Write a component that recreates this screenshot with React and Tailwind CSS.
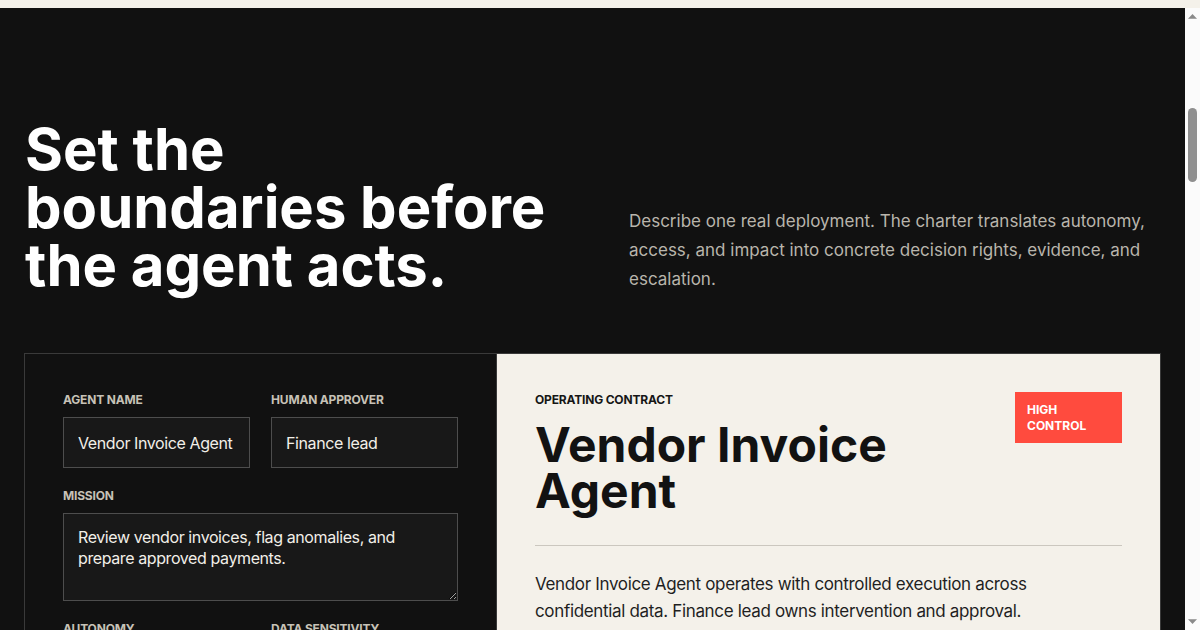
import React from "react";

const font = { fontFamily: "Inter, 'Noto Sans', sans-serif" };

function Label({ children, dark }) {
  return (
    <div
      className={`text-[12px] leading-[16px] font-bold uppercase tracking-[-0.015em] ${
        dark ? "text-[#161616]" : "text-[#c7c2b7]"
      }`}
    >
      {children}
    </div>
  );
}

function Field({ label, children }) {
  return (
    <div className="flex flex-col gap-[9px] min-w-0">
      <Label>{label}</Label>
      {children}
    </div>
  );
}

function TextInput({ value }) {
  return (
    <input
      readOnly
      value={value}
      className="w-full h-[51px] px-[14px] bg-[#181818] border border-[#4d4d4d] text-[16px] tracking-[-0.025em] text-[#f2efe8] outline-none"
      style={font}
    />
  );
}

function Select({ value }) {
  return (
    <div className="w-full h-[51px] px-[14px] bg-[#181818] border border-[#4d4d4d] text-[16px] tracking-[-0.025em] text-[#f2efe8] flex items-center justify-between">
      <span>{value}</span>
      <svg width="12" height="8" viewBox="0 0 12 8" fill="none">
        <path d="M1 1l5 5 5-5" stroke="#c7c2b7" strokeWidth="1.6" />
      </svg>
    </div>
  );
}

function Scrollbar() {
  return (
    <div className="w-[15px] shrink-0 bg-[#fbfbfb] flex flex-col items-center">
      <svg width="15" height="15" viewBox="0 0 15 15" className="shrink-0">
        <path d="M3 10.7h9L7.5 6z" fill="#8a8a8a" />
      </svg>
      <div className="h-[85px] shrink-0" />
      <div className="w-[9px] h-[74px] rounded-full bg-[#8f8f8f] shrink-0" />
      <div className="flex-1" />
      <svg width="15" height="15" viewBox="0 0 15 15" className="shrink-0">
        <path d="M3 4.3h9L7.5 9z" fill="#8a8a8a" />
      </svg>
    </div>
  );
}

export default function App() {
  return (
    <div className="h-screen flex flex-col overflow-hidden bg-[#111111]" style={font}>
      <div className="h-[8px] shrink-0 bg-[#f4f1ea]" />
      <div className="flex-1 min-h-0 flex">
        <main className="flex-1 min-w-0 overflow-hidden">
          <section className="px-6 pt-[112px] pb-24">
            <div className="flex items-end justify-between">
              <h1 className="text-white font-bold text-[58px] leading-[58px] tracking-normal pl-[1px]">
                Set the
                <br />
                boundaries before
                <br />
                the agent acts.
              </h1>
              <p className="w-[532px] text-[17px] leading-[29px] text-[#b9b5ac]">
                Describe one real deployment. The charter translates autonomy, access, and impact
                into concrete decision rights, evidence, and escalation.
              </p>
            </div>

            <div className="mt-[59px] flex border border-[#3a3a3a]">
              {/* form */}
              <div className="w-[472px] shrink-0 border-r border-[#3a3a3a] p-[38px] flex flex-col gap-[20px]">
                <div className="grid grid-cols-2 gap-[21px]">
                  <Field label="Agent name">
                    <TextInput value="Vendor Invoice Agent" />
                  </Field>
                  <Field label="Human approver">
                    <TextInput value="Finance lead" />
                  </Field>
                </div>
                <Field label="Mission">
                  <textarea
                    readOnly
                    value="Review vendor invoices, flag anomalies, and prepare approved payments."
                    className="w-full h-[88px] px-[14px] py-[13px] bg-[#181818] border border-[#4d4d4d] text-[16px] leading-[21px] tracking-[-0.025em] text-[#f2efe8] outline-none resize-y"
                    style={font}
                  />
                </Field>
                <div className="grid grid-cols-2 gap-[21px]">
                  <Field label="Autonomy">
                    <Select value="Controlled execution" />
                  </Field>
                  <Field label="Data sensitivity">
                    <Select value="Confidential" />
                  </Field>
                </div>
                <div className="grid grid-cols-2 gap-[21px]">
                  <Field label="Financial impact">
                    <Select value="High" />
                  </Field>
                  <Field label="Tool access">
                    <Select value="Write with approval" />
                  </Field>
                </div>
              </div>

              {/* contract */}
              <div className="flex-1 min-w-0 bg-[#f4f1ea] p-[38px]">
                <div className="flex items-start justify-between gap-6">
                  <div className="min-w-0">
                    <Label dark>Operating contract</Label>
                    <h2 className="mt-[14px] text-[48px] leading-[46px] font-bold tracking-normal text-[#121212]">
                      Vendor Invoice Agent
                    </h2>
                  </div>
                  <div className="w-[107px] shrink-0 bg-[#ff4b3e] px-3 py-[9.5px] text-white text-[12px] leading-[16px] font-bold uppercase">
                    High control
                  </div>
                </div>
                <div className="mt-[31px] h-px bg-[#cbc7bf]" />
                <p className="mt-[25px] text-[17px] leading-[27px] tracking-[-0.02em] text-[#1f1f1f] max-w-[540px]">
                  Vendor Invoice Agent operates with controlled execution across confidential data.
                  Finance lead owns intervention and approval.
                </p>
              </div>
            </div>
          </section>
        </main>
        <Scrollbar />
      </div>
    </div>
  );
}
